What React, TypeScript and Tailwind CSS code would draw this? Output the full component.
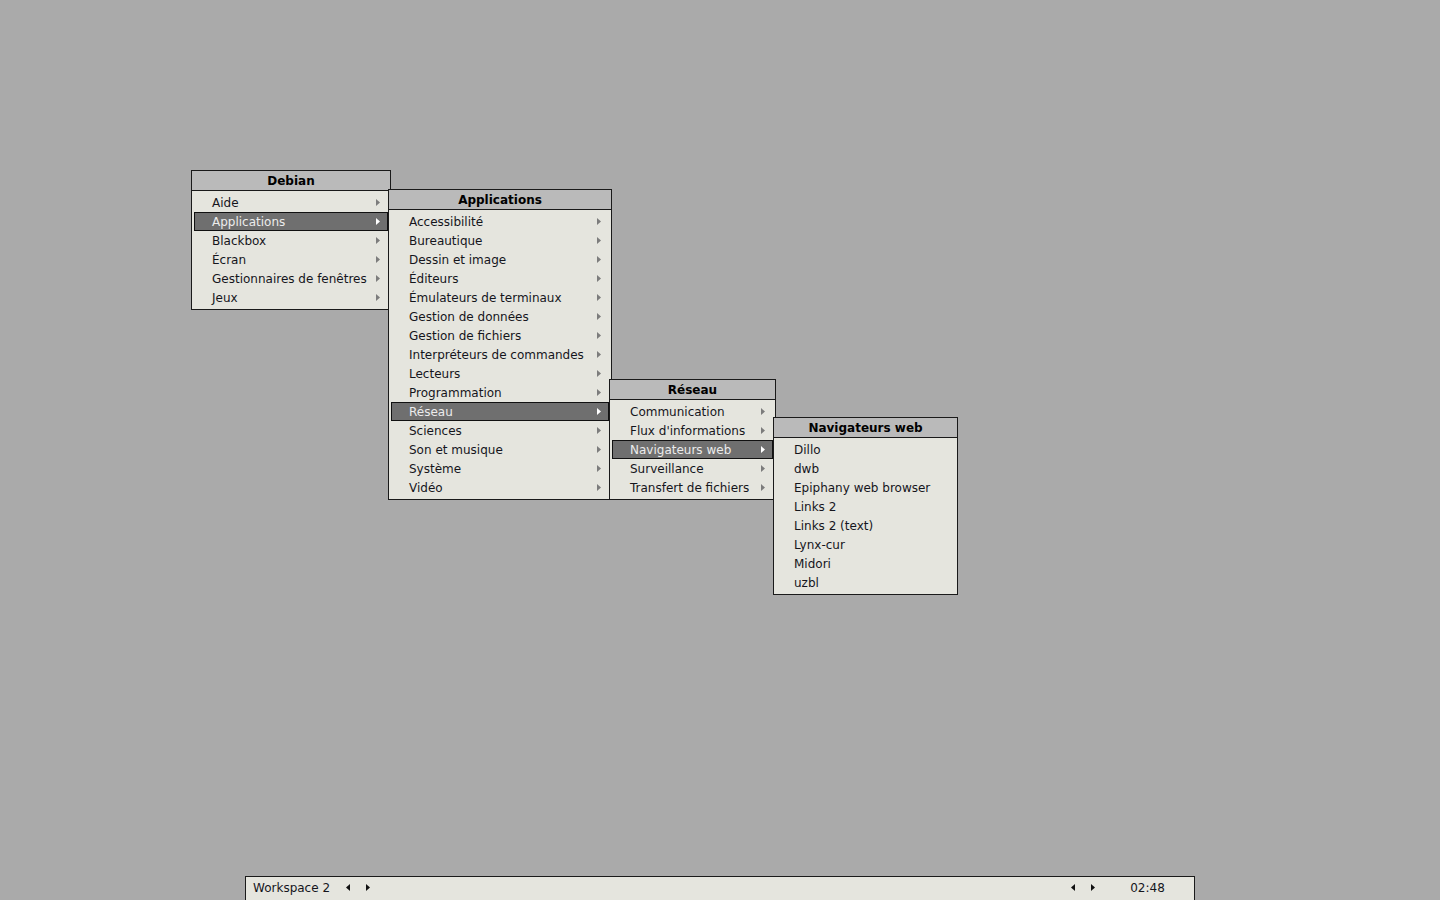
type Item = { label: string; sub?: boolean; selected?: boolean };

type MenuProps = {
  title: string;
  left: number;
  top: number;
  width: number;
  items: Item[];
};

function Arrow({ dir, color }: { dir: "left" | "right"; color: string }) {
  return (
    <svg width="4" height="7" viewBox="0 0 4 7" className="block">
      {dir === "right" ? (
        <path d="M0 0 L4 3.5 L0 7 Z" fill={color} />
      ) : (
        <path d="M4 0 L0 3.5 L4 7 Z" fill={color} />
      )}
    </svg>
  );
}

function Menu({ title, left, top, width, items }: MenuProps) {
  return (
    <div
      className="absolute border border-[#1a1a1a] bg-[#e5e5de]"
      style={{ left, top, width }}
    >
      <div className="h-[20px] border-b border-[#1a1a1a] bg-[#bababa] text-center text-[12px] leading-[20px] font-bold text-black">
        {title}
      </div>
      <div className="p-[2px]">
        {items.map((it) => (
          <div
            key={it.label}
            className={
              it.selected
                ? "flex h-[19px] items-center justify-between border border-[#111] bg-[#6f6f6f] pl-[17px] pr-[7px] text-[12px] text-[#ececec]"
                : "flex h-[19px] items-center justify-between border border-transparent pl-[17px] pr-[7px] text-[12px] text-[#15151c]"
            }
          >
            <span className="whitespace-nowrap pt-[2px] leading-[17px]">{it.label}</span>
            {it.sub && <Arrow dir="right" color={it.selected ? "#ffffff" : "#7c7c7c"} />}
          </div>
        ))}
      </div>
    </div>
  );
}

export default function App() {
  const debian: Item[] = [
    { label: "Aide", sub: true },
    { label: "Applications", sub: true, selected: true },
    { label: "Blackbox", sub: true },
    { label: "Écran", sub: true },
    { label: "Gestionnaires de fenêtres", sub: true },
    { label: "Jeux", sub: true },
  ];
  const apps: Item[] = [
    "Accessibilité",
    "Bureautique",
    "Dessin et image",
    "Éditeurs",
    "Émulateurs de terminaux",
    "Gestion de données",
    "Gestion de fichiers",
    "Interpréteurs de commandes",
    "Lecteurs",
    "Programmation",
    "Réseau",
    "Sciences",
    "Son et musique",
    "Système",
    "Vidéo",
  ].map((l) => ({ label: l, sub: true, selected: l === "Réseau" }));
  const reseau: Item[] = [
    "Communication",
    "Flux d'informations",
    "Navigateurs web",
    "Surveillance",
    "Transfert de fichiers",
  ].map((l) => ({ label: l, sub: true, selected: l === "Navigateurs web" }));
  const nav: Item[] = [
    "Dillo",
    "dwb",
    "Epiphany web browser",
    "Links 2",
    "Links 2 (text)",
    "Lynx-cur",
    "Midori",
    "uzbl",
  ].map((l) => ({ label: l }));

  return (
    <div
      className="relative h-[900px] w-[1440px] overflow-hidden bg-[#aaaaaa]"
      style={{ fontFamily: '"DejaVu Sans", Verdana, sans-serif' }}
    >
      <Menu title="Debian" left={191} top={170} width={200} items={debian} />
      <Menu title="Applications" left={388} top={189} width={224} items={apps} />
      <Menu title="Réseau" left={609} top={379} width={167} items={reseau} />
      <Menu title="Navigateurs web" left={773} top={417} width={185} items={nav} />

      {/* toolbar */}
      <div className="absolute bottom-0 left-[245px] flex h-[24px] w-[950px] items-center border border-b-0 border-[#1a1a1a] bg-[#e5e5de] pb-[2px] text-[12px] text-[#15151c]">
        <div className="w-[92px] whitespace-nowrap pl-[7px]">Workspace 2</div>
        <div className="flex w-[20px] justify-center">
          <Arrow dir="left" color="#111" />
        </div>
        <div className="flex w-[20px] justify-center">
          <Arrow dir="right" color="#111" />
        </div>
        <div className="flex-1" />
        <div className="flex w-[20px] justify-center">
          <Arrow dir="left" color="#111" />
        </div>
        <div className="flex w-[20px] justify-center">
          <Arrow dir="right" color="#111" />
        </div>
        <div className="w-[91px] pr-[2px] text-center">02:48</div>
      </div>
    </div>
  );
}
